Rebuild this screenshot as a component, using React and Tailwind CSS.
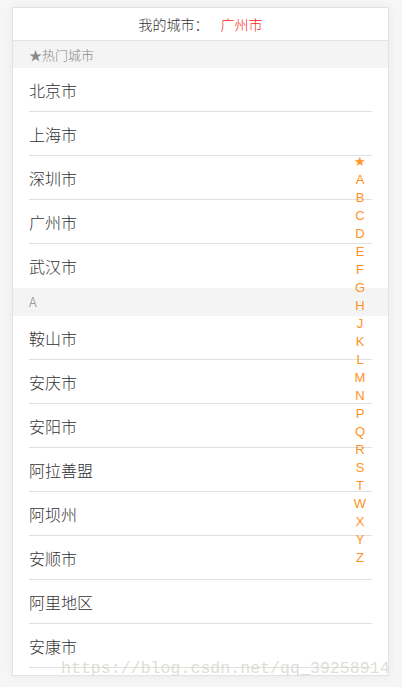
const hotCities = ['北京市', '上海市', '深圳市', '广州市', '武汉市']
const aCities = ['鞍山市', '安庆市', '安阳市', '阿拉善盟', '阿坝州', '安顺市', '阿里地区', '安康市']
const letters = ['★', 'A', 'B', 'C', 'D', 'E', 'F', 'G', 'H', 'J', 'K', 'L', 'M', 'N', 'P', 'Q', 'R', 'S', 'T', 'W', 'X', 'Y', 'Z']

function CityRow({ name, last }) {
  return (
    <div className={last ? 'mx-4 h-11 flex items-center text-[16px] text-[#333] font-light' : 'mx-4 h-11 flex items-center border-b border-[#e0e0e0] text-[16px] text-[#333] font-light'}>
      {name}
    </div>
  )
}

export default function App() {
  return (
    <div className="h-[687px] w-[402px] bg-[#f6f6f6] pt-[7px] font-['Noto_Sans_CJK_SC',sans-serif] relative overflow-hidden">
      <div className="ml-3 w-[377px] h-[669px] bg-white border border-[#e3e3e3] shadow-[0_0_8px_rgba(0,0,0,0.06)] overflow-hidden relative">
        {/* header */}
        <div className="h-[33px] border-b border-[#e3e3e3] flex items-center justify-center text-[14px] text-[#333] font-light">
          <span>我的城市：</span>
          <span className="ml-3 text-[#ff2020]">广州市</span>
        </div>

        <div className="h-[27px] bg-[#f4f4f4] flex items-center pl-4 text-[13px] text-[#8a8a8a] font-light">★热门城市</div>
        {hotCities.map((c, i) => (
          <CityRow key={c} name={c} last={i === hotCities.length - 1} />
        ))}

        <div className="h-7 bg-[#f4f4f4] flex items-center pl-4 text-[13px] text-[#8a8a8a] font-light">A</div>
        {aCities.map((c) => (
          <CityRow key={c} name={c} />
        ))}

        {/* letter index */}
        <div className="absolute left-[337px] top-[145px] w-[20px] flex flex-col items-center text-[13px] text-[#ff9224] font-['Liberation_Sans',sans-serif]">
          {letters.map((l) => (
            <div key={l} className="h-[18px] leading-[18px]">{l}</div>
          ))}
        </div>
      </div>

      {/* watermark */}
      <div className="absolute left-[61px] top-[657px] text-[16.6px] text-[#d6d6cc]/80 font-['Liberation_Mono',monospace]">
        https://blog.csdn.net/qq_39258914
      </div>
    </div>
  )
}
